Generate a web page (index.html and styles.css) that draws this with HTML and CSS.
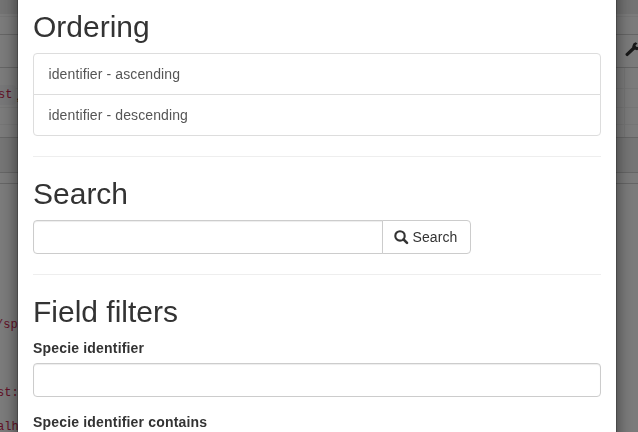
FILE: index.html
```html
<!DOCTYPE html>
<html lang="en">
<head>
<meta charset="utf-8">
<title>Filters</title>
<link rel="stylesheet" href="styles.css">
</head>
<body>
<div class="page">
  <div class="row nav"></div>
  <div class="row gap"></div>
  <div class="row crumb"></div>
  <div class="row tools">
    <svg class="wrench" width="15" height="15" viewBox="0 0 15 15"><path d="M2.2 12.4 8.7 6.2" stroke="#333" stroke-width="3.3" stroke-linecap="round"/><path d="M12.5 1.4 10.5 3.3 11.2 4.7 13 5 15 3.3V7L12 8.2 8.2 7 7.2 4.5 8.4 1.4 10.6.3Z" fill="#333"/></svg>
  </div>
  <div class="row line rule"></div>
  <div class="row request rule"><code>st</code><span>,</span></div>
  <div class="row spacer rule"></div>
  <div class="row panel rule"></div>
  <div class="row band"></div>
  <div class="row strip"></div>
  <div class="response">
    <code class="path">/sp</code>
    <code class="host">st:</code>
    <code class="local">alh</code>
  </div>
</div>
<div class="backdrop"></div>
<div class="modal">
  <div class="modal-body">
    <h2>Ordering</h2>
    <div class="list-group">
      <a class="list-item">identifier - ascending</a>
      <a class="list-item">identifier - descending</a>
    </div>
    <hr>
    <h2>Search</h2>
    <div class="input-group">
      <input class="control" type="text">
      <button class="btn" type="button"><svg width="15" height="15" viewBox="0 0 15 15"><circle cx="6" cy="5.9" r="4.7" fill="none" stroke="#333" stroke-width="2.1"/><path d="m9.5 9.4 3.5 3.5" stroke="#333" stroke-width="2.6" stroke-linecap="round"/></svg>Search</button>
    </div>
    <hr>
    <h2>Field filters</h2>
    <div class="form-group">
      <label for="identifier">Specie identifier</label>
      <input class="control" id="identifier" type="text">
    </div>
    <div class="form-group">
      <label for="contains">Specie identifier contains</label>
    </div>
  </div>
</div>
</body>
</html>
```
FILE: styles.css
```css
* { box-sizing: border-box; }
html, body { height: 100%; overflow: hidden; }
body {
  margin: 0;
  font: 14px/20px "Liberation Sans", Arial, sans-serif;
  color: #333;
}
.page {
  height: 432px;
  overflow: hidden;
  background: #f8f8f8;
}
.row { border-bottom: 1px solid #ededed; }
.rule {
  background: linear-gradient(#ededed, #ededed) 624px 0 / 1px 100% no-repeat;
}
.nav { height: 14px; background: #e9e9e9; border: 0; }
.gap { height: 3px; }
.crumb { height: 18px; border-color: #ccc; }
.tools {
  height: 33px;
  display: flex;
  justify-content: flex-end;
  padding: 7px 0 0;
  border-color: #ccc;
}
.wrench { flex: none; margin-right: -2px; }
.line { height: 21px; }
code {
  font: 12px/20px "Liberation Mono", monospace;
  color: #c7254e;
}
.request { height: 19px; display: flex; align-items: flex-start; }
.request code {
  width: 16px;
  height: 20px;
  margin-top: -4px;
  background: #f0f0f2;
  border-radius: 0 4px 4px 0;
  text-indent: -2px;
}
.request span { line-height: 12px; }
.spacer { height: 17px; }
.panel { height: 13px; border-color: #ccc; }
.band { height: 35px; background: #ececec; border-color: #ccc; }
.strip { height: 11px; border-color: #ccc; }
.response {
  display: flex;
  flex-direction: column;
  align-items: flex-start;
  padding-top: 131px;
}
.path { text-indent: -4px; margin-bottom: 48px; }
.host { text-indent: -3px; margin-bottom: 14px; }
.local { text-indent: -3px; }
.backdrop {
  position: fixed;
  inset: 0;
  background: rgba(0, 0, 0, .5);
}
.modal {
  position: absolute;
  left: 17px;
  top: -60px;
  width: 600px;
  height: 510px;
  background: #fff;
  background-clip: padding-box;
  border: 1px solid rgba(0, 0, 0, .2);
  box-shadow: 0 5px 15px rgba(0, 0, 0, .5);
}
.modal-body { padding: 69px 15px 0; }
h2 { font-size: 30px; font-weight: 500; line-height: 33px; margin: 0 0 10px; }
hr { margin: 20px 0; border: 0; border-top: 1px solid #eee; }
.list-item {
  display: block;
  padding: 10px 14.5px;
  color: #555;
  letter-spacing: .11px;
  border: 1px solid #ddd;
}
.list-item:first-child { border-radius: 4px 4px 0 0; }
.list-item:last-child { border-radius: 0 0 4px 4px; margin-top: -1px; }
.control {
  display: block;
  width: 100%;
  height: 34px;
  padding: 6px 12px;
  background: #fff;
  border: 1px solid #ccc;
  border-radius: 4px;
  box-shadow: inset 0 1px 1px rgba(0, 0, 0, .075);
}
.input-group { display: flex; width: 438px; }
.input-group .control { width: 350px; border-radius: 4px 0 0 4px; }
.btn {
  width: 89px;
  height: 34px;
  margin-left: -1px;
  padding: 0 0 0 11px;
  display: flex;
  align-items: center;
  gap: 3.5px;
  font: inherit;
  letter-spacing: .1px;
  color: #333;
  background: #fff;
  border: 1px solid #ccc;
  border-radius: 0 4px 4px 0;
}
.form-group { margin-bottom: 15px; }
label {
  display: block;
  margin-bottom: 5px;
  font-weight: 700;
  letter-spacing: .18px;
}
```
